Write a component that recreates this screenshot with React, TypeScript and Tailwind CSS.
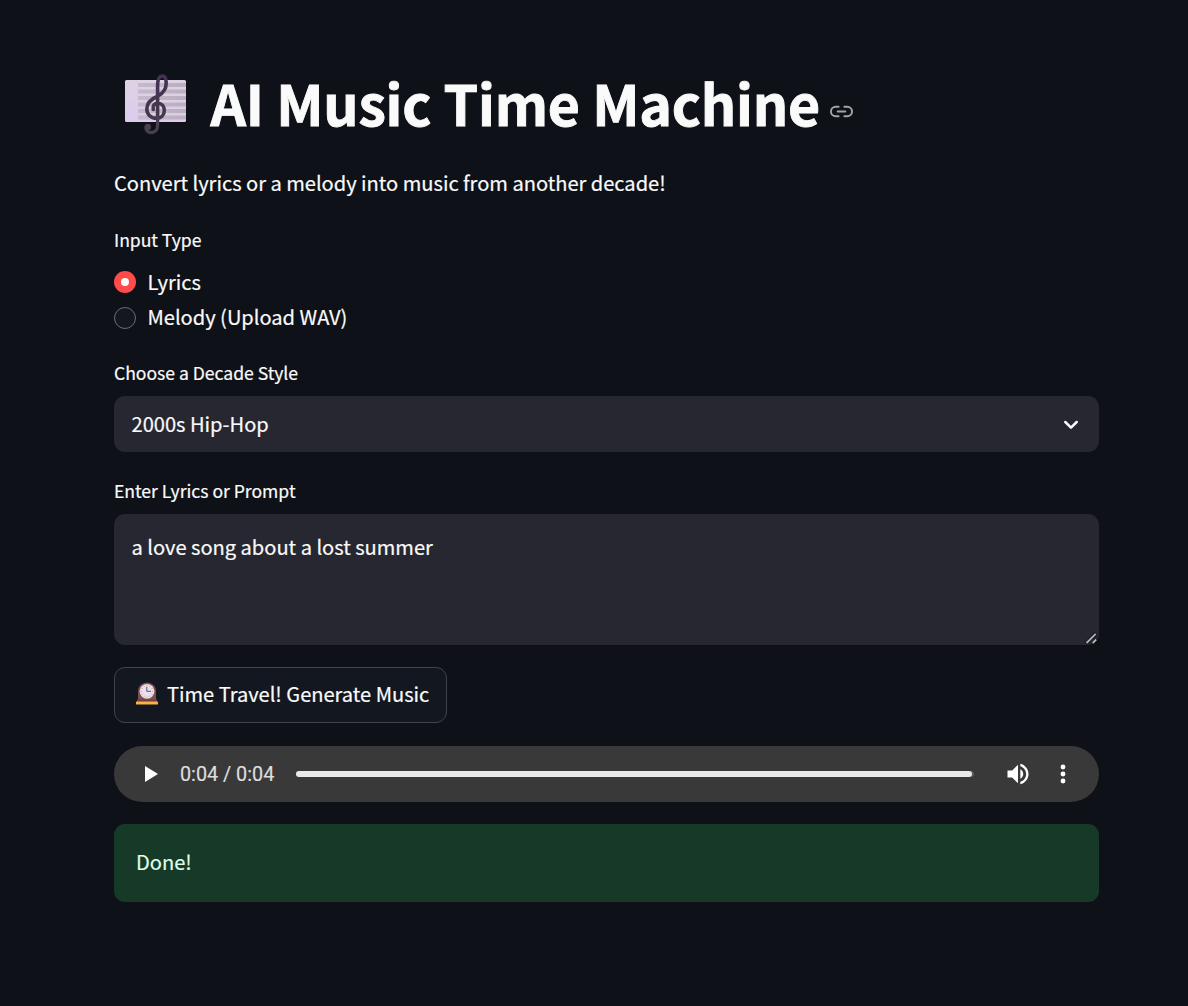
import React from "react";

function ScoreIcon() {
  const lines = [23, 29.5, 36, 42.5, 49, 55.5];
  return (
    <svg width="76" height="76" viewBox="0 0 76 76" fill="none" className="mb-[14px] shrink-0">
      <defs>
        <linearGradient id="paper" x1="0" y1="0" x2="0" y2="1">
          <stop stopColor="#ddd3e2" />
          <stop offset="1" stopColor="#dccbef" />
        </linearGradient>
        <linearGradient id="staff" gradientUnits="userSpaceOnUse" x1="24" y1="0" x2="72" y2="0">
          <stop stopColor="#c5b9cc" />
          <stop offset="1" stopColor="#b9afbd" />
        </linearGradient>
        <linearGradient id="clef" x1="0" y1="0" x2="0" y2="1">
          <stop stopColor="#463055" />
          <stop offset="1" stopColor="#443a4c" />
        </linearGradient>
      </defs>
      <rect x="11" y="20" width="61" height="42" rx="1.5" fill="url(#paper)" />
      {lines.map((y) => (
        <rect key={y} x="24" y={y} width="48" height="4" fill="url(#staff)" />
      ))}
      <path
        d="M43.6 59V26C43.6 18.5 45.5 16 48.2 16C51.3 16 52.2 19.5 52.2 23C52.2 29 49.5 33 44 36C37 39 32.8 43 32.8 49C32.8 54.5 37 58.3 42.4 58.3C47 58.3 50.3 55.2 50.3 50.5C50.3 46 47.5 43.2 44 43.2C40.3 43.2 38.5 45.7 39.2 49.5"
        stroke="url(#clef)" strokeWidth="3.6" strokeLinecap="round"
      />
      <path d="M43.6 57V65C43.6 70 40.8 72.5 37.4 72.5C34 72.5 32 70.5 31.9 67.5" stroke="#49404f" strokeWidth="3.3" strokeLinecap="round" />
      <circle cx="33.8" cy="67" r="3.2" fill="#49404f" />
    </svg>
  );
}

function ClockIcon() {
  const ticks = [0, 30, 60, 90, 120, 150, 180, 210, 240, 270, 300, 330];
  return (
    <svg width="22" height="23" viewBox="0 0 22 23" fill="none" className="mb-[3px] shrink-0">
      <path d="M2 20V9.5C2 4 6 .5 11 .5S20 4 20 9.5V20Z" fill="#7d4f50" />
      <path d="M1 17.5H21V20H1Z" fill="#6b3f43" />
      <rect x="0" y="19.5" width="22" height="3" rx=".4" fill="#fbb13f" />
      <circle cx="11" cy="9.3" r="7.4" fill="#eadff0" />
      {ticks.map((a) => (
        <circle key={a} cx="11" cy="3.5" r=".6" fill="#dba36b" transform={`rotate(${a} 11 9.3)`} />
      ))}
      <path d="M10.8 5.2V9.3H14.6" stroke="#4c4355" strokeWidth=".9" strokeLinecap="round" />
    </svg>
  );
}

const label = "h-7 text-[17.6px] leading-7 tracking-[-0.03px] font-normal";

export default function App() {
  return (
    <main className="flex h-[1006px] w-full flex-col bg-[#0e1117] pr-[89px] pl-[114px] font-['Noto_Sans_CJK_SC','Noto_Sans',sans-serif] text-[20.1px] tracking-[-0.02px] text-[#fafafa] [-webkit-text-stroke:0.2px]">
      <h1 className="mt-[60px] flex h-[90px] items-center text-[55.4px] leading-[85px] font-bold tracking-[-0.2px] whitespace-nowrap [-webkit-text-stroke:0.9px]">
        <ScoreIcon />
        <span className="mb-[5px] ml-[20.5px]">AI Music Time Machine</span>
        <svg width="23" height="23" viewBox="0 0 24 24" fill="none" stroke="#a3a5a8" strokeWidth="2" strokeLinecap="round" strokeLinejoin="round" className="mt-3 ml-[10.5px]">
          <path d="M15 7h3a5 5 0 0 1 0 10h-3m-6 0H6A5 5 0 0 1 6 7h3M8 12h8" />
        </svg>
      </h1>
      <p className="mt-[17px] h-8 leading-8"><span>Convert lyrics or a melody into music from another decade!</span></p>
      <div className={`mt-[27px] ${label}`}><span>Input Type</span></div>
      <div className="mt-[11px] flex h-[35px] items-center gap-[11.5px]">
        <span className="mb-[2px] flex size-[22px] items-center justify-center rounded-full bg-[#ff4b4b]">
          <span className="size-2 rounded-full bg-[#fafafa]" />
        </span>
        <span>Lyrics</span>
      </div>
      <div className="flex h-[35px] items-center gap-[11.5px]">
        <span className="size-[22px] rounded-full border border-[#6b6d72] bg-[#131720]" />
        <span>Melody (Upload WAV)</span>
      </div>
      <div className={`mt-[24px] ${label}`}><span>Choose a Decade Style</span></div>
      <button className="mt-[9px] flex h-14 shrink-0 items-center justify-between rounded-[11px] bg-[#262730] pr-[20px] pl-[17.5px] text-left">
        <span>2000s Hip-Hop</span>
        <svg width="16" height="10" viewBox="0 0 16 10" fill="none" stroke="#fafafa" strokeWidth="2.5" strokeLinecap="round" strokeLinejoin="round" className="mt-[2px]">
          <path d="M2.3 2L8 7.6L13.7 2" />
        </svg>
      </button>
      <div className={`mt-[25px] ${label}`}><span>Enter Lyrics or Prompt</span></div>
      <div className="mt-[9px] flex h-[131px] shrink-0 items-start justify-between rounded-[11px] bg-[#262730] pt-[17px] pl-[17.5px]">
        <span className="leading-8">a love song about a lost summer</span>
        <svg width="14" height="14" viewBox="0 0 14 14" fill="none" className="self-end">
          <path d="M1 12.5L11 2.5M8 12.5L12 8.5" stroke="#0e1117" strokeWidth="3.6" />
          <path d="M1.5 12L10.7 2.8M7.7 12L11.2 8.5" stroke="#b5b6b3" strokeWidth="1.8" />
        </svg>
      </div>
      <button className="mt-[22px] flex h-14 w-[333px] shrink-0 items-center gap-[9.5px] rounded-[11px] border border-[#41444c] bg-[#131720] pl-[20.5px] whitespace-nowrap">
        <ClockIcon />
        <span className="mb-[2px]">Time Travel! Generate Music</span>
      </button>
      <div className="mt-[23px] flex h-14 shrink-0 items-center rounded-full bg-[#383938] pl-[31px] font-[Roboto,sans-serif] text-[19.8px] tracking-normal text-[#dededd]">
        <svg width="13" height="16" viewBox="0 0 13 16" fill="#fff"><path d="M0 0L13 8L0 16Z" /></svg>
        <span className="mt-[2px] ml-[22px] w-[94px] whitespace-nowrap">0:04 / 0:04</span>
        <div className="ml-[22px] h-[6px] w-[678px] rounded-full bg-[#5b5c5a]">
          <div className="h-full w-[676px] rounded-full bg-[#e9e9e9]" />
        </div>
        <svg width="28" height="28" viewBox="0 0 24 24" fill="#fff" className="ml-[30px]">
          <path d="M3 9v6h4l5 5V4L7 9H3zm13.5 3c0-1.77-1.02-3.29-2.5-4.03v8.05c1.48-.73 2.5-2.25 2.5-4.02zM14 3.23v2.06c2.89.86 5 3.54 5 6.71s-2.11 5.85-5 6.71v2.06c4.01-.91 7-4.49 7-8.77s-2.99-7.86-7-8.77z" />
        </svg>
        <svg width="28" height="28" viewBox="0 0 24 24" fill="#fff" className="ml-[17px]">
          <circle cx="12" cy="6" r="2.1" /><circle cx="12" cy="12" r="2.1" /><circle cx="12" cy="18" r="2.1" />
        </svg>
      </div>
      <div className="mt-[22px] flex h-[78px] shrink-0 items-center rounded-[11px] bg-[#173928] pl-[22px] text-[#dffde9]">
        <span className="mb-[2px]">Done!</span>
      </div>
    </main>
  );
}
